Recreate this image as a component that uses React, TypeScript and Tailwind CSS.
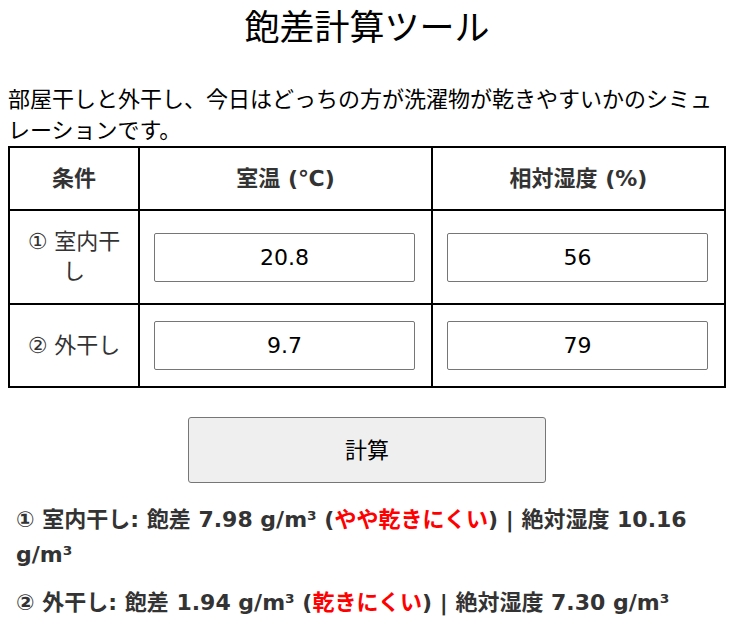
import { useState } from 'react'

const font = { fontFamily: '"DejaVu Sans", "Noto Sans CJK JP", sans-serif' }

type Row = { label: string; temp: string; hum: string }

const initialRows: Row[] = [
  { label: '① 室内干し', temp: '20.8', hum: '56' },
  { label: '② 外干し', temp: '9.7', hum: '79' },
]

export default function App() {
  const [rows, setRows] = useState<Row[]>(initialRows)

  const update = (i: number, key: 'temp' | 'hum', value: string) => {
    setRows((prev) => prev.map((r, idx) => (idx === i ? { ...r, [key]: value } : r)))
  }

  return (
    <div className="min-h-screen bg-white px-2 text-black" style={font}>
      <h1 className="mt-[7px] text-center text-[35px] leading-[42px] font-normal">飽差計算ツール</h1>

      <p className="mt-[35px] text-[22px] leading-[31px]">
        部屋干しと外干し、今日はどっちの方が洗濯物が乾きやすいかのシミュレーションです。
      </p>

      <table className="w-full table-fixed border-collapse border-2 border-black text-[22px]">
        <colgroup>
          <col className="w-[130px]" />
          <col />
          <col />
        </colgroup>
        <thead>
          <tr>
            <th className="border-2 border-black px-[15px] py-[16px] leading-[29px] font-bold text-[#333]">条件</th>
            <th className="border-2 border-black px-[15px] py-[16px] leading-[29px] font-bold text-[#333]">室温 (℃)</th>
            <th className="border-2 border-black px-[15px] py-[16px] leading-[29px] font-bold text-[#333]">相対湿度 (%)</th>
          </tr>
        </thead>
        <tbody>
          {rows.map((r, i) => (
            <tr key={r.label}>
              <td className="border-2 border-black px-[15px] py-[16px] text-center leading-[30px] text-[#333]">{r.label}</td>
              <td className="border-2 border-black pl-[14px] pr-[16px] py-[16px]">
                <input
                  value={r.temp}
                  onChange={(e) => update(i, 'temp', e.target.value)}
                  className="block h-[49px] w-full rounded-[2px] border border-[#767676] bg-white text-center text-[22px] text-black"
                  style={font}
                />
              </td>
              <td className="border-2 border-black pl-[14px] pr-[16px] py-[16px]">
                <input
                  value={r.hum}
                  onChange={(e) => update(i, 'hum', e.target.value)}
                  className="block h-[49px] w-full rounded-[2px] border border-[#767676] bg-white text-center text-[22px] text-black"
                  style={font}
                />
              </td>
            </tr>
          ))}
        </tbody>
      </table>

      <div className="mt-[29px] flex justify-center">
        <button
          className="h-[66px] w-[358px] rounded-[3px] border border-[#767676] bg-[#efefef] text-[22px] text-black"
          style={font}
        >
          計算
        </button>
      </div>

      <div className="mt-[19px] px-2 text-[22px] font-bold leading-[35px] text-[#333]">
        <p>
          ① 室内干し: 飽差 7.98 g/m³ (<span className="text-[#ff0000]">やや乾きにくい</span>) | 絶対湿度 10.16 g/m³
        </p>
        <p className="mt-[13px]">
          ② 外干し: 飽差 1.94 g/m³ (<span className="text-[#ff0000]">乾きにくい</span>) | 絶対湿度 7.30 g/m³
        </p>
      </div>
    </div>
  )
}
